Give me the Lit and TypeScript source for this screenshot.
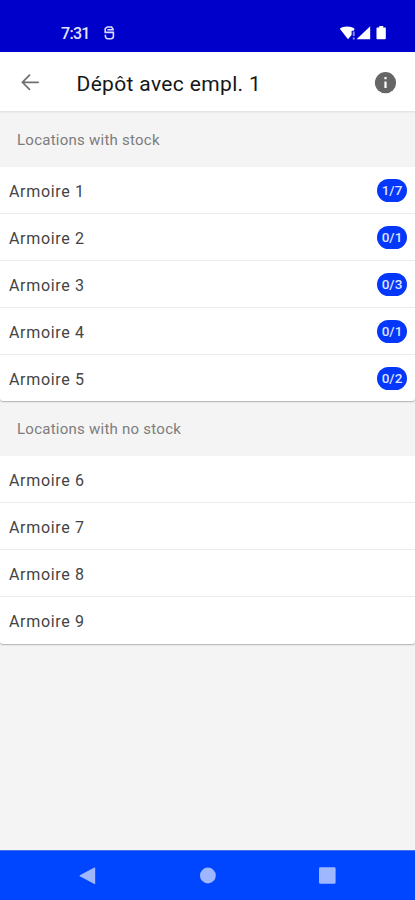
import { LitElement, html, css, nothing } from "lit";
import { customElement, property } from "lit/decorators.js";

interface Location {
  name: string;
  count?: string;
}

const STOCKED: Location[] = [
  { name: "Armoire 1", count: "1/7" },
  { name: "Armoire 2", count: "0/1" },
  { name: "Armoire 3", count: "0/3" },
  { name: "Armoire 4", count: "0/1" },
  { name: "Armoire 5", count: "0/2" },
];

const EMPTY: Location[] = [6, 7, 8, 9].map((n) => ({ name: `Armoire ${n}` }));

@customElement("status-bar")
class StatusBar extends LitElement {
  static styles = css`
    :host {
      display: flex;
      box-sizing: border-box;
      height: 52px;
      padding: 14px 27px 0 61px;
      align-items: center;
      background: #0000cb;
      color: #e4e4ff;
      font: 500 16px/20px Roboto, sans-serif;
    }
    .time {
      width: 42px;
      padding-top: 1px;
      letter-spacing: -0.7px;
    }
    .spacer {
      flex: 1;
    }
    svg {
      display: block;
    }
  `;
  render() {
    return html`
      <span class="time">7:31</span>
      <svg width="13" height="16" viewBox="0 0 13 16" fill="none" stroke="#dcdcff" stroke-width="1.6">
        <path d="M10.4 4.6L8.6 2H4.2L2.2 3.6V7.4H10.4V11.4Q10.2 13.6 8 13.8H4.8Q2.6 13.6 2.4 11.2V9.8M4.4 4.7H10.8" />
      </svg>
      <span class="spacer"></span>
      <svg width="49" height="16" viewBox="0 0 49 16" fill="#fff">
        <path d="M0.8 3.7C4.2 0.7 11.8 0.7 15.6 3.7L14.8 5.8H12.6V10L9 14.2Z" />
        <path d="M13.8 6.4H15.7V11H13.8ZM13.8 12.4H15.7V14.4H13.8Z" opacity=".55" />
        <path d="M31.2 1.2V14.2H17.6Z" />
        <path d="M40.3 1H44.2V2.4H46.2Q46.8 2.4 46.8 3V13.6Q46.8 14.3 46.1 14.3H38.2Q37.5 14.3 37.5 13.6V3Q37.5 2.4 38.2 2.4H40.3Z" />
      </svg>
    `;
  }
}

@customElement("title-bar")
class TitleBar extends LitElement {
  @property() heading = "";
  static styles = css`
    :host {
      display: flex;
      box-sizing: border-box;
      height: 60px;
      padding: 1px 18px 0 20px;
      align-items: center;
      background: #fff;
      border-bottom: 1px solid #e4e4e4;
      box-shadow: 0 1px 1px #ececec;
      position: relative;
    }
    h1 {
      flex: 1;
      margin: 0 0 0 36.5px;
      color: #161616;
      font: 400 21px/28px Roboto, sans-serif;
      letter-spacing: 0.35px;
      padding-top: 3px;
      white-space: nowrap;
    }
    svg {
      display: block;
    }
  `;
  render() {
    return html`
      <svg width="20" height="20" viewBox="0 0 20 20" fill="none" stroke="#707070" stroke-width="1.7">
        <path d="M18.8 10.3H3M10 2.7L2.4 10.3L10 17.9" />
      </svg>
      <h1>${this.heading}</h1>
      <svg width="23" height="23" viewBox="0 0 23 23">
        <circle cx="11.5" cy="11.7" r="10.6" fill="#666" />
        <path d="M10.4 6H12.6V8.2H10.4ZM10.4 10.4H12.6V17.1H10.4Z" fill="#fff" />
      </svg>
    `;
  }
}

@customElement("location-section")
class LocationSection extends LitElement {
  @property() label = "";
  @property({ attribute: false }) items: Location[] = [];
  static styles = css`
    :host {
      display: block;
      font-family: Roboto, sans-serif;
    }
    h2 {
      box-sizing: border-box;
      height: 55px;
      margin: 0;
      padding: 0 17px;
      color: #7c7c7c;
      font-size: 15px;
      font-weight: 400;
      line-height: 56px;
      letter-spacing: 0.25px;
    }
    .card {
      background: #fff;
      border-radius: 0 0 3px 3px;
      box-shadow: 0 1px 1.5px rgba(0, 0, 0, 0.28);
    }
    .row {
      display: flex;
      box-sizing: border-box;
      height: 47px;
      padding: 2px 8px 0 9px;
      align-items: center;
      justify-content: space-between;
      color: #444;
      font-size: 16px;
      letter-spacing: 0.67px;
      border-bottom: 1px solid #ebebeb;
    }
    .row:last-child {
      height: 46.4px;
      border-bottom: 0;
    }
    .badge {
      width: 30px;
      height: 23px;
      border-radius: 12px;
      background: #0537fa;
      color: #dde4ff;
      font-size: 13.5px;
      font-weight: 500;
      line-height: 23px;
      letter-spacing: 0;
      text-align: center;
      margin-top: -2px;
    }
  `;
  render() {
    return html`
      <h2>${this.label}</h2>
      <div class="card">
        ${this.items.map(
          (item) => html`<div class="row">
            <span>${item.name}</span>
            ${item.count ? html`<span class="badge">${item.count}</span>` : nothing}
          </div>`
        )}
      </div>
    `;
  }
}

@customElement("nav-bar")
class NavBar extends LitElement {
  static styles = css`
    :host {
      display: flex;
      box-sizing: border-box;
      height: 50px;
      padding: 0 77px 0 78px;
      align-items: center;
      justify-content: space-between;
      background: #0045ff;
      border-top: 1px solid #4a70e4;
    }
    svg {
      display: block;
      fill: #9fb7ff;
    }
  `;
  render() {
    return html`
      <svg width="20" height="20" viewBox="0 0 20 20"><path d="M16.4 1.5Q17.2 1.2 17.2 2V17.4Q17.2 18.3 16.4 17.9L1.8 10.2Q1.2 9.7 1.8 9.3Z" /></svg>
      <svg width="20" height="20" viewBox="0 0 20 20"><circle cx="9.9" cy="9.5" r="7.9" /></svg>
      <svg width="20" height="20" viewBox="0 0 20 20"><rect x="1" y="1.3" width="16.6" height="16.4" rx="1.3" /></svg>
    `;
  }
}

@customElement("app-root")
class AppRoot extends LitElement {
  static styles = css`
    :host {
      display: flex;
      flex-direction: column;
      height: 900px;
      background: #f4f4f4;
      overflow: hidden;
    }
    main {
      flex: 1;
    }
  `;
  render() {
    return html`
      <status-bar></status-bar>
      <title-bar heading="Dépôt avec empl. 1"></title-bar>
      <main>
        <location-section label="Locations with stock" .items=${STOCKED}></location-section>
        <location-section label="Locations with no stock" .items=${EMPTY}></location-section>
      </main>
      <nav-bar></nav-bar>
    `;
  }
}
